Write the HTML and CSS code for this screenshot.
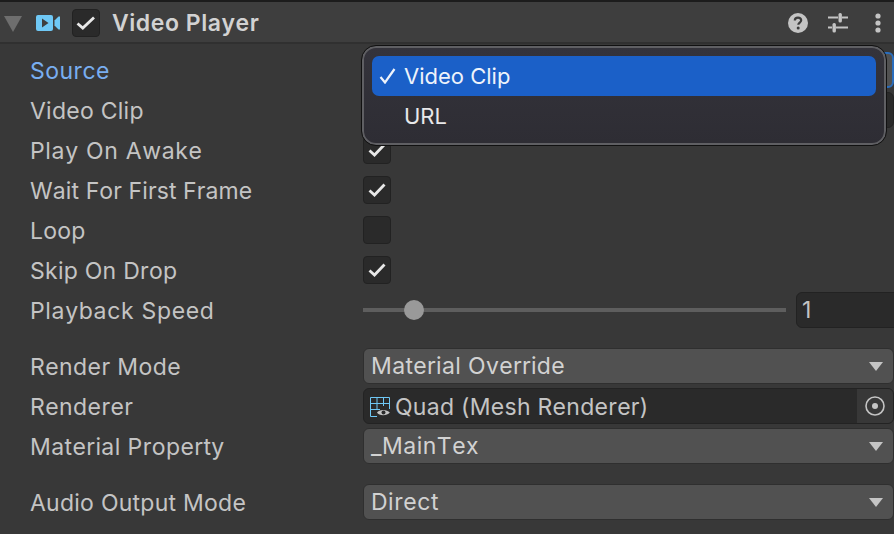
FILE: index.html
```
<!DOCTYPE html>
<html lang="en">
<head>
<meta charset="utf-8">
<title>Video Player</title>
<link rel="stylesheet" href="styles.css">
</head>
<body>
<div class="inspector">
  <header class="header">
    <svg class="fold" width="18" height="16" viewBox="0 0 18 16"><path d="M0 0H18L9 16Z" fill="#6e6e6e"/></svg>
    <svg class="cam" width="24" height="16" viewBox="0 0 24 16"><path d="M2 0H15A2 2 0 0 1 17 2V14A2 2 0 0 1 15 16H2A2 2 0 0 1 0 14V2A2 2 0 0 1 2 0ZM6 3.500V12.500L12.500 8Z" fill="#6fc8f5" fill-rule="evenodd"/><path d="M18.500 5.500L22.500 1.500H24V14.500H22.500L18.500 10.500Z" fill="#6fc8f5"/></svg>
    <span class="check head-check"><svg width="20" height="14" viewBox="0 0 20 14"><path d="M1.500 7.500L6.800 12L18 1.500" class="tick"/></svg></span>
    <span class="title">Video Player</span>
    <span class="head-icons">
      <svg class="help" width="20" height="20" viewBox="0 0 20 20"><circle cx="10" cy="10" r="10" fill="#c4c4c4"/><path d="M6.800 7.600C6.800 5.700 8.200 4.600 10 4.600C11.900 4.600 13.200 5.700 13.200 7.300C13.200 9.500 10.300 9.700 10.300 11.800" fill="none" stroke="#3c3c3c" stroke-width="2.200"/><circle cx="10.200" cy="15" r="1.500" fill="#3c3c3c"/></svg>
      <svg class="tune" width="20" height="20" viewBox="0 0 20 20"><path d="M0 4.500H10M14 4.500H20M0 14.500H4M8 14.500H20" stroke="#c4c4c4" stroke-width="2" fill="none"/><rect x="10.500" y="0" width="3.400" height="9.500" rx="1.500" fill="#c4c4c4"/><rect x="4.500" y="10" width="3.400" height="9.500" rx="1.500" fill="#c4c4c4"/></svg>
      <svg width="6" height="20" viewBox="0 0 6 20"><circle cx="3" cy="3" r="2.600" fill="#c4c4c4"/><circle cx="3" cy="10" r="2.600" fill="#c4c4c4"/><circle cx="3" cy="17" r="2.600" fill="#c4c4c4"/></svg>
    </span>
  </header>

  <div class="group first-group">
    <div class="row"><span class="label label-active label-mid">Source</span><div class="select select-focus"></div></div>
    <div class="row"><span class="label">Video Clip</span><div class="objfield"></div></div>
    <div class="row"><span class="label label-wide">Play On Awake</span><span class="check"><svg width="18" height="14" viewBox="0 0 18 14"><path d="M1.500 7.500L6.500 12L16.500 1.500" class="tick"/></svg></span></div>
    <div class="row"><span class="label label-tight">Wait For First Frame</span><span class="check"><svg width="18" height="14" viewBox="0 0 18 14"><path d="M1.500 7.500L6.500 12L16.500 1.500" class="tick"/></svg></span></div>
    <div class="row"><span class="label">Loop</span><span class="check"></span></div>
    <div class="row"><span class="label">Skip On Drop</span><span class="check"><svg width="18" height="14" viewBox="0 0 18 14"><path d="M1.500 7.500L6.500 12L16.500 1.500" class="tick"/></svg></span></div>
    <div class="row"><span class="label label-wide">Playback Speed</span>
      <div class="slider"><div class="track"></div><div class="thumb"></div></div>
      <div class="number">1</div>
    </div>
  </div>

  <div class="group">
    <div class="row"><span class="label label-mid">Render Mode</span><div class="select"><span>Material Override</span><i class="arrow"></i></div></div>
    <div class="row"><span class="label label-mid">Renderer</span>
      <div class="objfield">
        <svg class="mesh" width="20" height="20" viewBox="0 0 20 20"><path d="M.5.500H19.500V12M.5.500V19.500H7M.5 6.500H19.500M.5 12.500H10M7 .5V12M13.500 .5V9" fill="none" stroke="#6fc8f5" stroke-width="1"/><path d="M7 15.500C9 12 17 12 19.800 15.500C17 19 9 19 7 15.500Z" fill="#c4c4c4"/><circle cx="13.500" cy="15.500" r="2" fill="#2a2a2a"/></svg>
        <span class="objname">Quad (Mesh Renderer)</span>
        <span class="picker"><svg width="20" height="20" viewBox="0 0 20 20"><circle cx="10" cy="10" r="9" fill="none" stroke="#c4c4c4" stroke-width="1.600"/><circle cx="10" cy="10" r="3" fill="#c4c4c4"/></svg></span>
      </div>
    </div>
    <div class="row"><span class="label label-mid">Material Property</span><div class="select select-loose"><span>_MainTex</span><i class="arrow"></i></div></div>
  </div>

  <div class="group">
    <div class="row"><span class="label">Audio Output Mode</span><div class="select select-loose"><span>Direct</span><i class="arrow"></i></div></div>
  </div>

  <div class="popup">
    <div class="option option-on"><svg class="mark" width="17" height="16" viewBox="0 0 17 16"><path d="M1.500 9L6 14.500L15.500 1" fill="none" stroke="#eef3fb" stroke-width="2.200"/></svg>Video Clip</div>
    <div class="option option-plain">URL</div>
  </div>
</div>
</body>
</html>
```
FILE: styles.css
```
* { box-sizing: border-box; }
html, body { margin: 0; padding: 0; }
body { width: 894px; height: 534px; overflow: hidden; background: #383838; font-family: Inter, "Liberation Sans", sans-serif; font-kerning: none; }
.inspector { position: relative; width: 894px; height: 534px; overflow: hidden; }
.header { display: flex; align-items: center; height: 44px; padding: 2px 0 0 4px; background: #3e3e3e; border-top: 2px solid #1c1c1c; border-bottom: 2px solid #303030; color: #d2d2d2; }
.fold { margin-right: 14px; margin-top: 1px; }
.cam { margin-right: 12px; }
.title { margin-left: 12px; font-size: 23px; font-weight: 600; letter-spacing: .55px; color: #d2d2d2; }
.head-icons { display: flex; align-items: center; margin-left: auto; padding-right: 13px; }
.help { margin-right: 20px; }
.tune { margin-right: 27px; }
.tick { fill: none; stroke: #e8e8e8; stroke-width: 2.800; }
.check { display: flex; align-items: center; justify-content: center; flex: none; width: 28px; height: 28px; background: #2a2a2a; border: 1px solid #222; border-radius: 4px; }
.group { display: flex; flex-direction: column; margin-bottom: 16px; }
.first-group { padding-top: 6px; }
.row { display: flex; align-items: center; height: 40px; padding-left: 30px; }
.label { flex: none; width: 333px; margin-top: 2px; font-size: 23px; letter-spacing: .25px; color: #c4c4c4; }
.label-mid { letter-spacing: .42px; }
.label-wide { letter-spacing: .68px; }
.label-tight { letter-spacing: .1px; }
.label-active { color: #79aef0; }
.select { display: flex; align-items: center; justify-content: space-between; flex: none; width: 531px; height: 36px; padding: 0 10px 0 7px; background: #515151; border: 1px solid #2f2f2f; border-radius: 6px; font-size: 23px; letter-spacing: .35px; color: #d2d2d2; }
.select-loose { letter-spacing: .5px; }
.select-focus { border: 2px solid #2a6dbd; }
.arrow { width: 0; height: 0; border-left: 7px solid transparent; border-right: 7px solid transparent; border-top: 9px solid #c4c4c4; }
.objfield { display: flex; align-items: center; flex: none; width: 531px; height: 36px; padding-left: 6px; background: #2a2a2a; border: 1px solid #232323; border-radius: 6px; font-size: 23px; letter-spacing: .28px; color: #c4c4c4; overflow: hidden; }
.mesh { flex: none; margin: 2px 5px 0 0; }
.objname { flex: 1; margin-top: 2px; }
.picker { display: flex; align-items: center; justify-content: center; flex: none; width: 36px; height: 34px; background: #383838; }
.slider { position: relative; flex: none; width: 423px; height: 20px; margin-right: 10px; }
.track { position: absolute; left: 0; right: 0; top: 8px; height: 4px; background: #5e5e5e; }
.thumb { position: absolute; left: 41px; top: 0; width: 20px; height: 20px; border-radius: 50%; background: #999; }
.number { flex: none; width: 120px; height: 36px; padding-left: 5px; background: #2a2a2a; border: 1px solid #222; border-radius: 6px; font-size: 23px; line-height: 34px; color: #c4c4c4; }
.popup { position: absolute; left: 362px; top: 46px; width: 524px; height: 99px; padding: 8px 8px 7px; background: linear-gradient(#34333b, #2e2d34); border: 2px solid #5f5f63; outline: 1px solid #111; border-radius: 14px; color: #e8e8ea; font-size: 22px; }
.option { display: flex; align-items: center; height: 40px; border-radius: 7px; }
.option-on { background: #1b60c8; color: #eef3fb; }
.option-plain { padding-left: 32px; }
.mark { flex: none; margin: 0 8px 0 7px; }
```
